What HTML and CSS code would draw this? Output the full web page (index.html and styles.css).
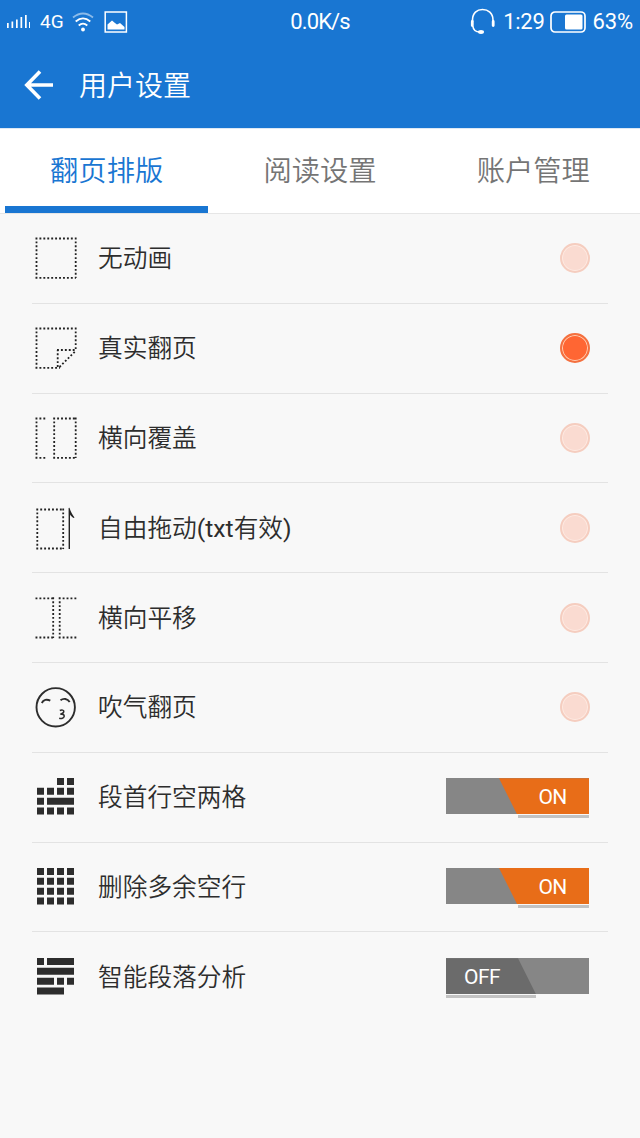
FILE: index.html
```
<!DOCTYPE html>
<html lang="zh-CN">
<head>
  <meta charset="UTF-8" />
  <meta name="viewport" content="width=device-width, initial-scale=1" />
  <title>用户设置</title>
  <link rel="stylesheet" href="styles.css">
</head>
<body>
  <header class="header">
    <div class="status">
      <div class="status-left">
        <svg class="signal" width="24" height="15" viewBox="0 0 24 15" fill="#fff">
          <path d="M0 9h1.700v5H0zM4.500 7.500h1.700V14H4.500zM9 5.500h1.700V14H9zM13.500 3h1.700v11h-1.700zM18 1h1.700v13H18zM22 8h1v6h-1z"/>
        </svg>
        <span class="network">4G</span>
        <svg class="wifi" width="22" height="22" viewBox="0 0 22 22" fill="none" stroke="#fff" stroke-width="1.800">
          <path d="M1 6.500Q11-1.500 21 6.500" opacity=".5"/>
          <path d="M3.700 10.500Q11 4.300 18.300 10.500M6.700 14.500Q11 10.800 15.300 14.500"/>
          <circle cx="11" cy="18.500" r="1.900" fill="#fff" stroke="none"/>
        </svg>
        <svg width="24" height="22" viewBox="0 0 24 22">
          <rect x="1.200" y="1" width="21.200" height="20" fill="none" stroke="#fff" stroke-width="1.500"/>
          <path d="M3.500 18.500v-5l4.500-4 3 2.500 2 1.500 3-1.500 4.500 4v2.500z" fill="#fff"/>
        </svg>
      </div>
      <span class="speed">0.0K/s</span>
      <div class="status-right">
        <svg width="27" height="27" viewBox="0 0 27 27" fill="none" stroke="#fff" stroke-width="1.600">
          <path d="M3.500 14v-2C3.500 5 8 1.500 13.500 1.500S24 5 24 12v2"/>
          <path d="M3.300 13.500v4M24.200 13.500v4" stroke-width="2.800" stroke-linecap="round"/>
          <path d="M3.800 18c.5 4 3.500 6 7 6"/>
          <ellipse cx="12" cy="24" rx="3" ry="1.900" fill="#fff" stroke="none"/>
        </svg>
        <span class="clock">1:29</span>
        <svg class="battery" width="36" height="22" viewBox="0 0 36 22">
          <rect x="1" y="1" width="34" height="20" rx="4" fill="none" stroke="#fff" stroke-width="1.700"/>
          <rect x="15" y="3.500" width="17.500" height="15" rx="1.500" fill="#fff"/>
        </svg>
        <span class="percent">63%</span>
      </div>
    </div>
    <div class="title-bar">
      <svg class="back" width="30" height="30" viewBox="0 0 30 30" fill="none" stroke="#fff" stroke-width="3.600">
        <path d="M29 15H3M16 1.500 2.800 15 16 28.500"/>
      </svg>
      <h1 class="title">用户设置</h1>
    </div>
  </header>

  <nav class="tabs">
    <a class="tab active">翻页排版</a>
    <a class="tab">阅读设置</a>
    <a class="tab">账户管理</a>
  </nav>

  <main class="list">
    <div class="row">
      <svg class="icon dotted" viewBox="0 0 44 44"><path d="M1.500 2.500H42M1.500 41.800H42M2.500 1.500V42M41.700 1.500V42"/></svg>
      <span class="label">无动画</span>
      <span class="radio"></span>
    </div>
    <div class="row">
      <svg class="icon dotted" viewBox="0 0 44 44"><path d="M1.500 2.500H42M2.500 1.500V42M41.700 1.500V25M1.500 41.800H26M23.700 41V24M23 24H42M25.500 41 41.500 25"/></svg>
      <span class="label">真实翻页</span>
      <span class="radio checked"></span>
    </div>
    <div class="row">
      <svg class="icon dotted" viewBox="0 0 44 44"><path d="M1.500 2.500H13M1.500 41.800H13M2.500 1.500V42M19.200 2.500H42M19.200 41.800H42M20.200 1.500V42M41.700 1.500V42"/></svg>
      <span class="label">横向覆盖</span>
      <span class="radio"></span>
    </div>
    <div class="row">
      <svg class="icon dotted" viewBox="0 0 44 44">
        <path d="M2.300 3.500H30M2.300 42.500H30M3.300 2.500V43M29.200 2.500V43"/>
        <path class="solid" d="M34.600 2l.9-.3c1.200 4 2.700 6.500 5 9.800l-.8.600c-1.800-1.200-3-2.400-3.700-3.600V43h-1.400z"/>
      </svg>
      <span class="label">自由拖动<span class="latin">(txt</span>有效<span class="latin">)</span></span>
      <span class="radio"></span>
    </div>
    <div class="row">
      <svg class="icon dotted" viewBox="0 0 44 44"><path d="M1.500 2.300H20M1.500 41.500H20M19.200 1.300V42M24.700 2.300H43M24.700 41.500H43M25.700 1.300V42"/></svg>
      <span class="label">横向平移</span>
      <span class="radio"></span>
    </div>
    <div class="row">
      <svg class="icon face" viewBox="0 0 44 44">
        <circle cx="21.700" cy="22.300" r="19.200"/>
        <path d="M7.800 18c1.500-3.400 5-4.200 8.500-2.300M26.500 15.300c3-2.400 7-1.700 9.200 1.700"/>
        <path d="M25.800 25.500c2-.9 4.200-.5 4 1.200-.2 1.500-2 2.200-3.500 2.600 2.200-.4 4.200.3 3.900 2-.4 1.900-2.700 2.500-5 1.900" stroke-width="1.500"/>
      </svg>
      <span class="label">吹气翻页</span>
      <span class="radio"></span>
    </div>
    <div class="row">
      <svg class="icon" viewBox="0 0 44 44">
        <path d="M23 3h7v7h-7zM33 3h7v7h-7zM3 12.800h7v7H3zM13 12.800h7v7h-7zM23 12.800h7v7h-7zM33 12.800h7v7h-7zM3 22.700h7v7H3zM13 22.700h27v7H13zM3 32.500h7v7H3zM13 32.500h7v7h-7zM23 32.500h7v7h-7zM33 32.500h7v7h-7z"/>
      </svg>
      <span class="label">段首行空两格</span>
      <div class="switch on"><span class="thumb">ON</span></div>
    </div>
    <div class="row">
      <svg class="icon" viewBox="0 0 44 44">
        <path d="M3 3h7v7H3zM13 3h7v7h-7zM23 3h7v7h-7zM33 3h7v7h-7zM3 12.800h7v7H3zM13 12.800h7v7h-7zM23 12.800h7v7h-7zM33 12.800h7v7h-7zM3 22.700h7v7H3zM13 22.700h7v7h-7zM23 22.700h7v7h-7zM33 22.700h7v7h-7zM3 32.500h7v7H3zM13 32.500h7v7h-7zM23 32.500h7v7h-7zM33 32.500h7v7h-7z"/>
      </svg>
      <span class="label">删除多余空行</span>
      <div class="switch on"><span class="thumb">ON</span></div>
    </div>
    <div class="row">
      <svg class="icon" viewBox="0 0 44 44">
        <path d="M3 3h7v7H3zM13 3h27v7H13zM3 12.800h37v7H3zM3 22.700h17v7H3zM23 22.700h7v7h-7zM33 22.700h7v7h-7zM3 32.500h27v7H3z"/>
      </svg>
      <span class="label">智能段落分析</span>
      <div class="switch off"><span class="thumb">OFF</span></div>
    </div>
  </main>
</body>
</html>
```
FILE: styles.css
```
* {
  box-sizing: border-box;
}

body {
  margin: 0;
  min-height: 1138px;
  background: #f8f8f8;
  color: #2d2d2d;
  font-family: Roboto, "Noto Sans CJK SC", sans-serif;
}

.header {
  height: 128px;
  background: #1976d2;
  color: #fff;
}

.status {
  display: grid;
  grid-template-columns: 1fr auto 1fr;
  align-items: center;
  height: 43px;
  padding: 0 7px;
  font-size: 22px;
}

.status-left, .status-right {
  display: flex;
  align-items: center;
}

.status-right {
  justify-content: flex-end;
}

.network {
  margin: 0 8px 0 9px;
  font-size: 19px;
}

.wifi {
  margin-right: 10px;
}

.speed {
  letter-spacing: -0.9px;
}

.clock {
  margin: 0 6px 0 7px;
  letter-spacing: -0.3px;
}

.battery {
  margin-right: 6px;
}

.percent {
  letter-spacing: -0.1px;
}

.title-bar {
  display: flex;
  align-items: center;
  height: 84px;
  padding-left: 24px;
}

.title {
  margin: 0 0 2px 25px;
  font-size: 28px;
  font-weight: 350;
}

.tabs {
  display: grid;
  grid-template-columns: repeat(3, 1fr);
  height: 86px;
  background: #fff;
  border-top: 1px solid #dce8f5;
  border-bottom: 1px solid #e6e6e6;
}

.tab {
  margin: 0 5px;
  padding-top: 9px;
  border-bottom: 7px solid transparent;
  color: #757575;
  font-size: 28.3px;
  font-weight: 350;
  line-height: 67px;
  text-align: center;
}

.tab.active {
  border-color: #1976d2;
  color: #1976d2;
}

.list {
  padding: 0 32px;
}

.row {
  display: flex;
  align-items: center;
  height: 89.8px;
  padding: 0 19px 0 2px;
  border-bottom: 1px solid #e3e3e3;
}

.row:last-child {
  border-bottom: none;
}

.icon {
  width: 44px;
  height: 44px;
  fill: #2d2d2d;
}

.dotted {
  fill: none;
  stroke: #222;
  stroke-width: 1.8;
  stroke-dasharray: 1.9 2.03;
}

.solid {
  fill: #222;
  stroke: none;
}

.face {
  fill: none;
  stroke: #2d2d2d;
  stroke-width: 1.9;
}

.label {
  flex: 1;
  margin-left: 20px;
  padding-bottom: 4px;
  font-size: 24.7px;
  font-weight: 350;
}

.latin {
  font-weight: 400;
}

.radio {
  width: 30px;
  height: 30px;
  margin-right: -0.5px;
  border: 2px solid #f5cdbf;
  border-radius: 50%;
  background: #fadbd1;
  box-shadow: inset 0 0 0 1px #fdeae2;
}

.radio.checked {
  border-color: #f4703f;
  background: #ff6633;
  box-shadow: inset 0 0 0 1px #ffd0b5;
}

.switch {
  display: flex;
  flex-direction: column;
  width: 143px;
  height: 40px;
  margin-top: 2px;
  background: linear-gradient(#868686, #868686) no-repeat 0 0 / 100% 36px;
}

.thumb {
  height: 36px;
  color: #fff;
  font-size: 21px;
  line-height: 39px;
  text-align: center;
  letter-spacing: -0.6px;
}

.switch::after {
  content: "";
  width: 71px;
  height: 3px;
  margin-top: 1px;
  background: #c2c2c2;
}

.on {
  align-items: flex-end;
}

.on .thumb {
  width: 90px;
  padding-left: 17px;
  background: #e86d18;
  clip-path: polygon(0 0, 100% 0, 100% 100%, 18px 100%);
}

.off .thumb {
  width: 90px;
  padding-right: 18px;
  background: #6b6b6b;
  clip-path: polygon(0 0, 72px 0, 100% 100%, 0 100%);
}

.off::after {
  width: 90px;
}
```
